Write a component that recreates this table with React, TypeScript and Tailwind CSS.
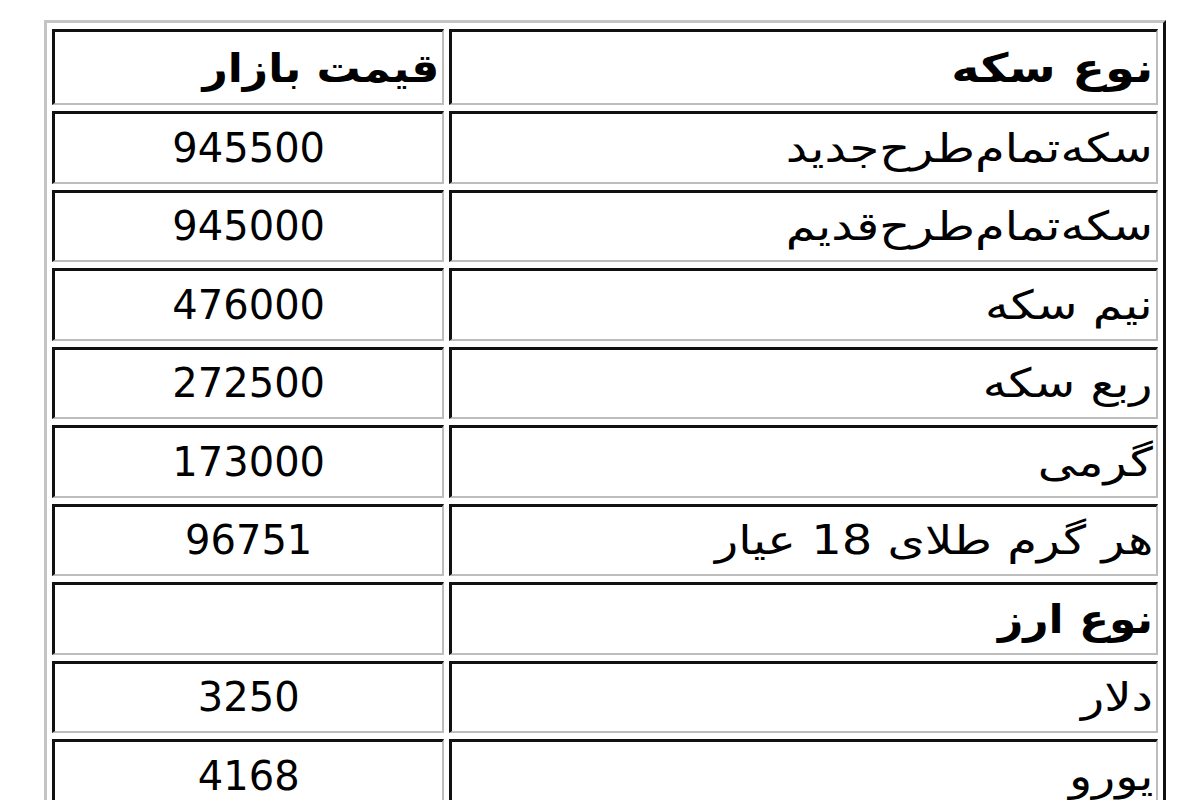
import React from 'react';

const rows: { name: string; price: string; bold?: boolean }[] = [
  { name: 'سکه‌تمام‌طرح‌جدید', price: '945500' },
  { name: 'سکه‌تمام‌طرح‌قدیم', price: '945000' },
  { name: 'نیم سکه', price: '476000' },
  { name: 'ربع سکه', price: '272500' },
  { name: 'گرمی', price: '173000' },
  { name: 'هر گرم طلای 18 عیار', price: '96751' },
  { name: 'نوع ارز', price: '', bold: true },
  { name: 'دلار', price: '3250' },
  { name: 'یورو', price: '4168' },
];

const cell =
  'border-t-[3px] border-l-[3px] border-r-2 border-b-2 border-t-[#111] border-l-[#111] border-r-[#bdbdbd] border-b-[#bdbdbd] px-[3px] py-0';

// Persian glyphs in the original (Tahoma) run wider than DejaVu's
const fa = 'inline-block origin-right scale-x-[1.2] whitespace-nowrap';
const faBold = 'inline-block origin-right scale-x-[1.1] whitespace-nowrap';

export default function App() {
  return (
    <div className="min-h-[800px] bg-white pl-[44px] pt-[20px] text-black [font-family:'DejaVu_Sans',sans-serif]">
      <table
        dir="rtl"
        className="w-[1122px] table-fixed border-separate border-spacing-x-[5px] border-spacing-y-[6px] border-t-[3px] border-l-[3px] border-r-[3px] border-b-[3px] border-t-[#c4c4c4] border-l-[#c4c4c4] border-r-[#111] border-b-[#111] text-[40px] leading-none"
      >
        <colgroup>
          <col className="w-[708px]" />
          <col className="w-[392px]" />
        </colgroup>
        <thead>
          <tr className="h-[76px]">
            <th className={`${cell} text-right font-bold`}>
              <span className={fa}>نوع سکه</span>
            </th>
            <th className={`${cell} text-right font-bold`}>
              <span className={faBold}>قیمت بازار</span>
            </th>
          </tr>
        </thead>
        <tbody>
          {rows.map((r) => (
            <tr key={r.name} className="h-[72.5px]">
              <td className={`${cell} text-right ${r.bold ? 'font-bold' : ''}`}>
                <span className={r.bold ? faBold : fa}>{r.name}</span>
              </td>
              <td className={`${cell} text-center`}>{r.price}</td>
            </tr>
          ))}
        </tbody>
      </table>
    </div>
  );
}
